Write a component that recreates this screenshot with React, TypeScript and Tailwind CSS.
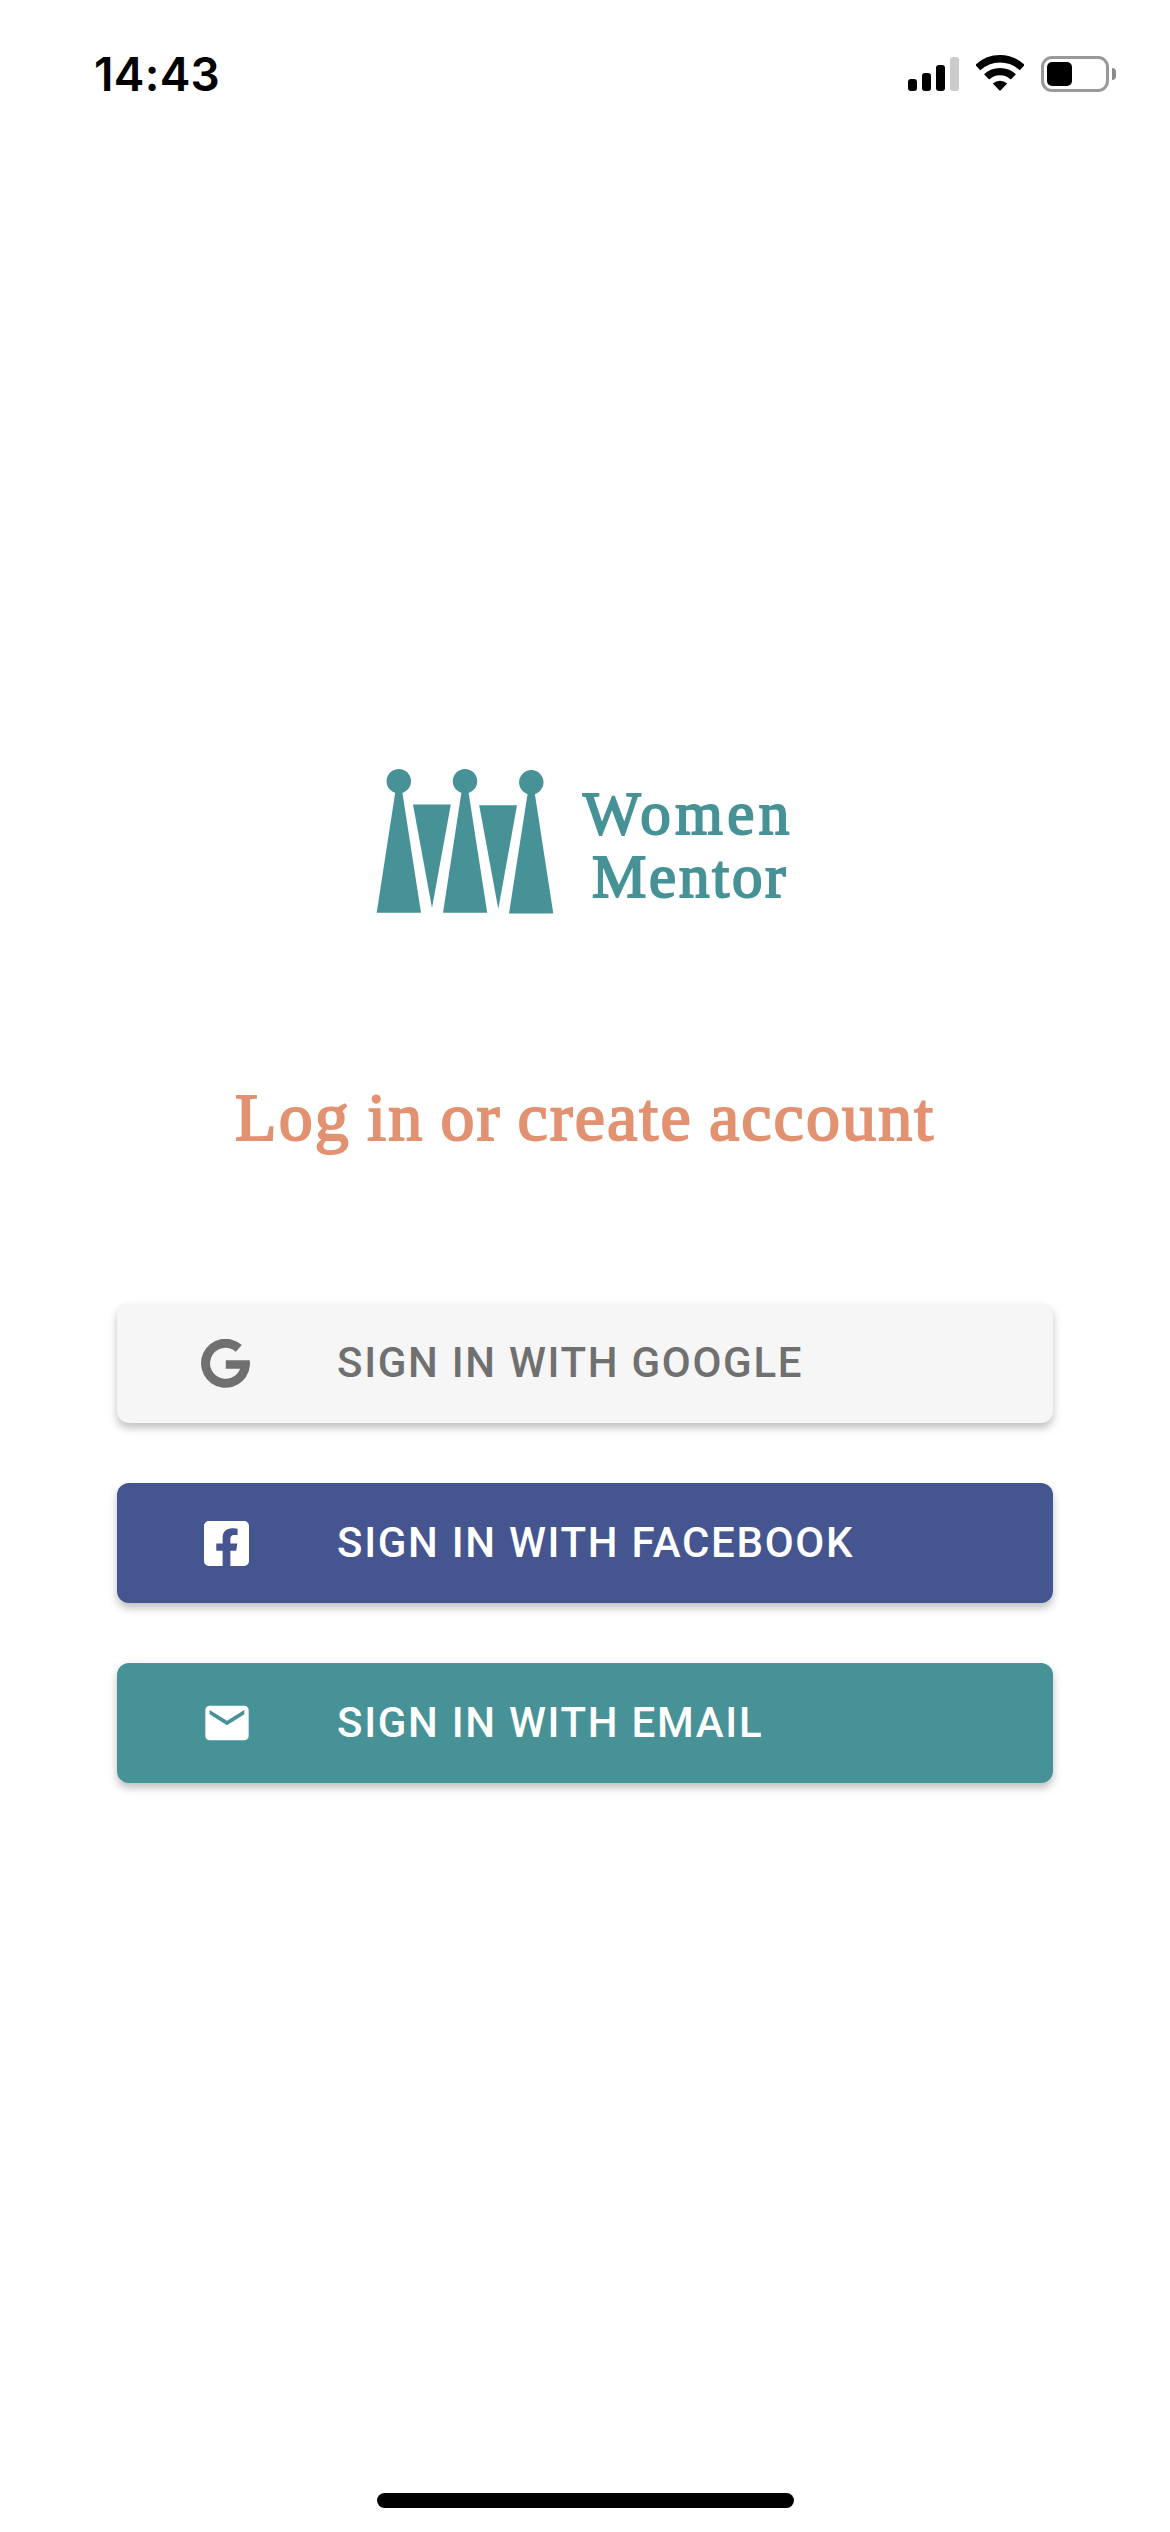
import type { ReactNode } from "react";

function StatusBar() {
  return (
    <header className="flex h-[141px] items-start justify-between pl-[94px] pr-[54px] pt-[44px]">
      <span className="font-['Inter',sans-serif] text-[46px] font-semibold leading-[60px] tracking-[0.3px] text-black">14:43</span>
      <div className="flex items-start pt-[11px]">
        <div className="mt-[2px] flex h-[34px] items-end gap-[5px]">
          <span className="h-[12px] w-[9px] rounded-[3px] bg-black" />
          <span className="h-[18px] w-[9px] rounded-[3px] bg-black" />
          <span className="h-[26px] w-[9px] rounded-[3px] bg-black" />
          <span className="h-[34px] w-[9px] rounded-[3px] bg-[#cbcbcb]" />
        </div>
        <svg className="ml-[17px] h-[36px] w-[48px]" viewBox="0 0 48 36" fill="none" stroke="#000" strokeWidth="7.3">
          <path d="M1.8 12.6A32.3 32.3 0 0 1 46.2 12.6" />
          <path d="M10.6 21.9A19.4 19.4 0 0 1 37.4 21.9" />
          <path d="M24 36L16.8 28.6A10.6 10.6 0 0 1 31.2 28.6Z" fill="#000" stroke="none" />
        </svg>
        <div className="ml-[17px] mt-[1px] flex items-center">
          <div className="h-[36px] w-[68px] rounded-[11px] border-[3px] border-[#999] p-[3px]">
            <div className="h-[24px] w-[25px] rounded-[5px] bg-black" />
          </div>
          <div className="ml-[3px] h-[12px] w-[4px] rounded-r-full bg-[#8c8c8c]" />
        </div>
      </div>
    </header>
  );
}

function Logo() {
  return (
    <div className="flex h-[160px] pl-[376px]">
      <svg className="h-[146px] w-[180px] shrink-0" viewBox="376 768 180 146" fill="#469296">
        <circle cx="398.8" cy="781.2" r="12.2" />
        <path d="M395.3 792H402.3L421 912.8H376.7Z" />
        <path d="M413 804.4H450.8L432 908Z" />
        <circle cx="465" cy="781.2" r="12.2" />
        <path d="M461.5 792H468.5L487.2 912.8H443Z" />
        <path d="M479.2 805.3H517L498.3 909Z" />
        <circle cx="531.3" cy="782.3" r="12.2" />
        <path d="M527.7 793H534.7L553.3 913.5H509Z" />
      </svg>
      <div className="ml-[27px] mt-[14px] font-['Liberation_Serif',serif] text-[61px] leading-[63px] text-[#469296] [-webkit-text-stroke:2px_#469296]">
        <div className="tracking-[4.5px]">Women</div>
        <div className="pl-[9px] tracking-[2.8px]">Mentor</div>
      </div>
    </div>
  );
}

function SignInButton({ icon, label, colors }: { icon: ReactNode; label: string; colors: string }) {
  return (
    <button
      className={`flex h-[120px] w-full items-center rounded-[12px] pl-[80px] shadow-[0_5px_8px_rgba(0,0,0,0.25)] ${colors}`}
    >
      <span className="flex w-[60px] justify-center">{icon}</span>
      <span className="ml-[80px] font-['Roboto',sans-serif] text-[42px] font-medium leading-[60px] tracking-[1.7px]">
        {label}
      </span>
    </button>
  );
}

function GoogleIcon() {
  return (
    <svg className="mr-[3px] h-[49px] w-[49px]" viewBox="0 0 49 49" fill="currentColor">
      <path d="M40.8 6A24.5 24.5 0 1 0 48.8 21.2H24.8V29.7H39.1A15.5 15.5 0 1 1 34.8 12.7Z" />
    </svg>
  );
}

function FacebookIcon() {
  return (
    <svg className="mr-[1px] mt-[1px] h-[45px] w-[45px]" viewBox="0 32 448 448" fill="currentColor">
      <path d="M400 32H48A48 48 0 0 0 0 80v352a48 48 0 0 0 48 48h137.25V327.69h-63V256h63v-54.64c0-62.15 37-96.48 93.67-96.48 27.14 0 55.52 4.84 55.52 4.84v61h-31.27c-30.81 0-40.42 19.12-40.42 38.73V256h68.78l-11 71.69h-57.78V480H400a48 48 0 0 0 48-48V80a48 48 0 0 0-48-48z" />
    </svg>
  );
}

function EmailIcon() {
  return (
    <svg className="mr-[1px] h-[52px] w-[52px]" viewBox="0 0 24 24" fill="currentColor">
      <path d="M20 8L12 13L4 8V6L12 11L20 6M20 4H4C2.89 4 2 4.89 2 6V18A2 2 0 0 0 4 20H20A2 2 0 0 0 22 18V6C22 4.89 21.1 4 20 4Z" />
    </svg>
  );
}

export default function App() {
  return (
    <div className="flex h-[2532px] w-[1170px] flex-col overflow-hidden bg-white">
      <StatusBar />
      <main className="flex flex-1 flex-col pt-[627px]">
        <Logo />
        <h1 className="mt-[149px] pl-[235px] whitespace-nowrap font-['Liberation_Serif',serif] text-[68px] leading-[80px] tracking-[2.15px] [word-spacing:-3px] text-[#e29271] [-webkit-text-stroke:2px_#e29271]">
          Log in or create account
        </h1>
        <div className="mt-[146px] flex flex-col gap-[60px] px-[117px]">
          <SignInButton icon={<GoogleIcon />} label="SIGN IN WITH GOOGLE" colors="bg-[#f6f6f6] text-[#707070]" />
          <SignInButton icon={<FacebookIcon />} label="SIGN IN WITH FACEBOOK" colors="bg-[#445590] text-white" />
          <SignInButton icon={<EmailIcon />} label="SIGN IN WITH EMAIL" colors="bg-[#469296] text-white" />
        </div>
      </main>
      <footer className="flex h-[39px] justify-center">
        <div className="h-[15px] w-[417px] rounded-full bg-black" />
      </footer>
    </div>
  );
}
